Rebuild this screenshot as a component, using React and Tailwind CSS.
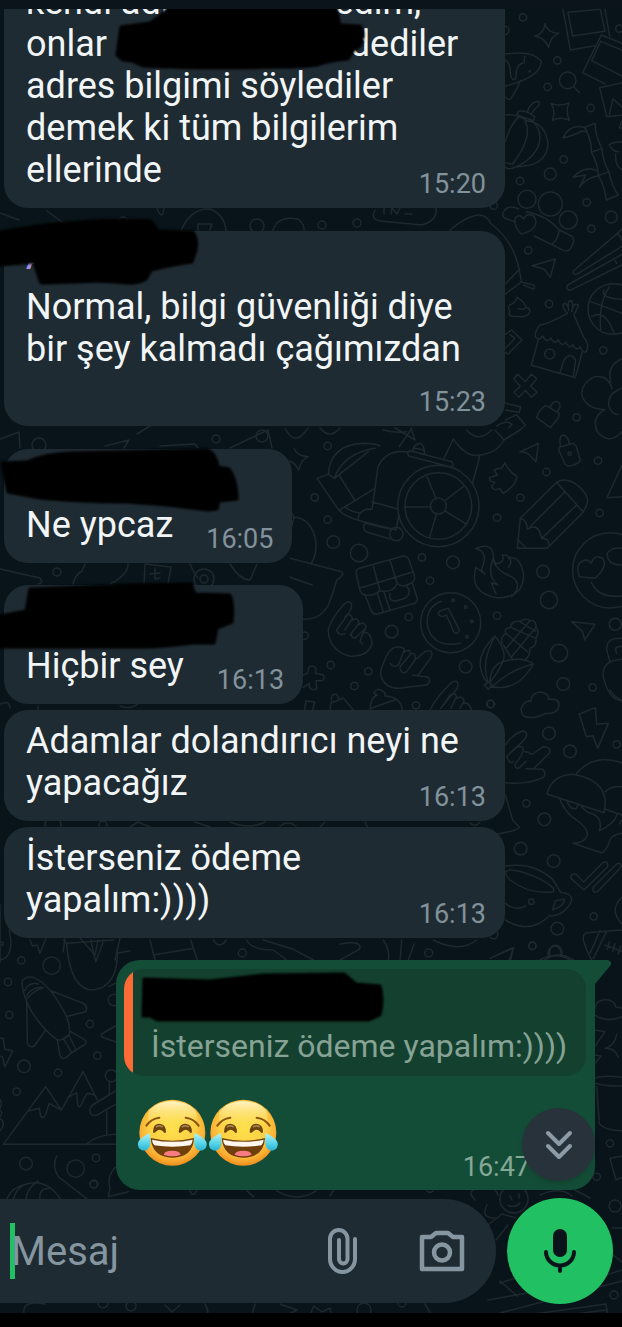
import { useState } from 'react'

// wallpaper doodles, grouped by the patch of wall they sit on
const DOODLES = [
  {
    id: 'top-right',
    transform: 'translate(490 0) scale(0.33333)',
    circles: [
      [99, 52, 11], [202, 181, 11], [233, 241, 25], [173, 261, 11], [302, 324, 11], [221, 478, 11],
      [181, 522, 18], [90, 543, 11], [111, 598, 27], [181, 612, 36], [235, 660, 27], [290, 607, 11],
      [364, 651, 18], [304, 686, 11], [115, 751, 11], [177, 912, 11], [179, 1062, 15], [340, 1051, 11],
      [260, 1252, 11], [388, 86, 11], [11, 617, 11], [119, 214, 2], [370, 927, 76], [44, 91, 13],
    ],
    paths: [
      'M165 71 Q171 99 206 100 Q180 110 176 143 Q165 112 134 109 Q163 99 165 71Z',
      'M219 28 L241 150 L314 137 M234 37 L331 28 L345 94 L248 108Z M345 28 L359 108',
      'M334 105 L278 218 L345 252 M334 105 L396 130 M332 124 L305 182 L396 228 M332 124 L396 150',
      'M396 248 L329 263 L350 350 L396 345 M358 344 L369 296 L396 322 M396 362 L388 384 L396 384',
      'M46 162 Q130 150 154 184 Q153 232 46 258 M46 180 Q62 190 61 220 Q66 248 78 235 L79 212 Q85 190 102 188 L104 169 M46 292 Q60 306 66 290 Q86 258 91 242',
      'M251 260 L269 279',
      'M184 311 Q210 320 237 309 Q225 335 239 361 Q213 348 187 361 Q198 335 184 311Z',
      'M46 345 Q80 340 110 362 M110 362 Q166 368 174 430 Q172 500 78 500 Q58 512 46 502 M46 425 Q60 375 85 352 M105 362 Q130 410 68 492 M128 364 Q172 410 128 466 Q100 494 78 500 M46 488 Q60 494 71 490 M84 334 Q110 330 134 350 L131 362 L81 345Z M111 338 Q120 306 145 304 Q154 314 136 325 L125 340',
      'M283 382 L315 370 Q316 410 336 445 Q338 485 357 515 Q365 560 385 585 L349 600 Q343 555 325 527 Q324 490 304 457 Q306 420 283 382 M219 413 Q240 370 283 382 Q300 400 276 393 Q245 410 219 413 M304 457 L336 445 M325 527 L357 515 M320 512 Q285 495 249 532 L287 525 L268 562 Q285 535 325 527 M396 425 Q370 425 358 434 Q366 455 386 455 M377 462 Q375 500 396 509',
      'M51 657 Q28 650 46 628 Q62 615 86 627 M51 657 L76 665 M108 635 Q170 645 208 690 L244 708 Q256 716 247 735 Q238 758 222 752 L133 708 M208 690 Q203 720 188 731',
      'M94 702 Q80 690 73 665 Q76 645 92 648 L101 657 Q108 640 128 646 Q142 658 136 674 Q130 694 94 702Z',
      'M126 797 L196 777 L181 832 L162 807Z',
      'M0 669 Q70 720 88 810 L94 846 L130 855 Q138 862 130 867 L100 855 M46 852 L84 812 M46 882 L94 846 M0 707 L42 753',
      'M396 688 L250 813 Q247 825 260 823 L396 739 M396 763 L233 855 Q225 868 240 871 L396 795 M384 700 L396 720 M372 775 L380 790',
      'M81 892 Q76 910 60 914 Q51 926 61 933 Q50 945 66 949 L98 950 Q120 946 120 932 Q117 922 108 922 Q104 905 81 892 M85 926 Q100 932 108 922',
      'M302 905 L396 940 M332 988 Q325 910 358 860 M342 870 Q330 895 396 898 M305 950 Q345 925 372 1000',
      'M232 940 Q210 915 225 910 Q235 915 236 932 Q230 900 243 902 Q253 910 245 935 Q250 905 265 915 Q262 925 252 945 M232 940 Q180 970 148 976 Q134 995 136 1010 Q150 1025 157 1008 Q172 1032 182 1014 Q196 1037 204 1019 Q218 1044 227 1026 Q240 1050 248 1034 Q262 1056 270 1040 Q278 1060 289 1055 Q300 1030 280 1010 L252 945',
      'M145 1018 L124 1096 L256 1133 L277 1055 M210 1118 L222 1080 Q240 1055 257 1080 L250 1128',
      'M46 1003 L65 990 L96 1020 L54 1062 L46 1058 M46 1045 L75 1015 L60 1004',
      'M83 1122 L105 1145 L125 1122 L140 1137 L122 1158 L141 1177 L124 1192 L106 1171 L87 1192 L72 1177 L91 1158 L71 1137Z',
      'M46 1210 L92 1220 L88 1237 L46 1230 M46 1260 L80 1244 L106 1275 L90 1290 M20 1278 Q50 1258 66 1273 L56 1284',
      'M167 1216 L208 1240 L205 1253 L181 1283 L140 1253 Q145 1230 167 1216Z M180 1222 Q190 1198 207 1207 Q216 1220 200 1236',
      'M366 1166 Q355 1125 315 1130 Q278 1145 275 1180 Q282 1225 345 1229 Q305 1250 320 1290 M396 1077 Q350 1095 362 1145 M396 1165 Q350 1180 357 1220 Q364 1240 384 1244',
    ],
  },
  {
    id: 'middle',
    transform: 'translate(290 430) scale(0.33333)',
    circles: [
      [113, 48, 11], [74, 202, 11], [113, 269, 11], [130, 336, 19], [207, 369, 26], [396, 382, 11],
      [489, 397, 19], [420, 452, 11], [621, 263, 11], [691, 203, 11], [769, 126, 11], [924, 92, 11],
      [929, 249, 11], [759, 425, 19], [777, 510, 26], [621, 557, 11], [356, 561, 11], [305, 605, 19],
      [527, 710, 19], [235, 724, 11], [122, 705, 11], [193, 768, 11], [378, 826, 11], [601, 822, 11],
      [807, 669, 26], [820, 762, 19], [908, 772, 11], [976, 583, 18], [445, 228, 122], [445, 228, 100],
      [445, 228, 24], [319, 312, 20], [482, 578, 90], [489, 511, 4], [527, 531, 4], [545, 574, 4],
      [531, 620, 4], [839, 71, 5], [44, 617, 11], [961, 421, 113],
    ],
    paths: [
      'M12 55 Q22 80 55 80 Q32 90 27 120 Q14 100 0 93',
      'M115 133 Q120 45 220 40 Q255 40 270 48 M133 145 Q160 70 255 55 M133 145 L235 65 M115 133 L81 145 L147 241 Q165 260 209 272 M115 133 L133 145 M147 135 L193 209 M147 241 L250 178 M165 230 Q180 245 213 250 M354 66 Q290 55 264 110 L246 238 Q205 235 204 271 L318 300 L327 255 M246 215 L323 237',
      'M225 280 L300 297 M225 280 Q215 295 228 305 L300 327 M360 62 L485 95 Q495 108 483 111 L358 79 Q348 70 360 62 M368 64 Q370 42 392 40 Q404 48 403 72 M375 55 L403 60',
      'M411 140 L438 205 M520 170 L463 213 M424 231 L345 231 M440 250 L419 320 M463 242 L531 283',
      'M462 85 L490 27 Q530 85 570 75 L547 162 M570 75 Q620 70 642 30 L690 0 M642 30 L615 0 M530 0 Q565 40 605 0 M328 50 L362 0 M280 0 Q320 10 350 5',
      'M690 66 L745 40 L738 95 L718 75 Q708 65 690 66Z',
      'M808 52 L850 40 Q860 45 862 60 L871 92 Q860 105 835 108 Q822 104 820 90 L806 60Z M811 48 Q805 16 822 15 Q836 22 838 42',
      'M645 98 Q655 125 680 138 Q680 165 640 190 L628 175 Q612 185 605 170 L615 157 Q598 155 598 143 L622 135 L612 120 Q625 112 634 116Z',
      'M682 355 L691 265 L800 157 Q830 138 870 172 Q900 200 890 225 L880 246 L778 348 L770 355Z M800 157 L880 246 M825 185 L720 290 M860 225 L755 325 M691 265 Q712 270 712 298 Q745 275 755 325 Q778 325 778 348 M682 328 L710 355',
      'M996 105 L951 203 L996 200 M918 0 Q955 50 996 5',
      'M557 355 Q610 335 610 380 Q612 405 625 400 Q645 395 637 375 Q665 375 662 400 L655 412 M557 355 Q595 365 578 410 Q570 420 585 432 L558 412 Q535 490 625 504 Q705 500 700 430 Q690 375 655 385 M608 388 Q590 440 624 465 L604 458 Q610 475 618 490 M608 388 Q620 425 665 440 Q700 465 665 500',
      'M199 432 Q195 420 208 415 L340 378 Q350 378 355 385 L373 435 Q378 455 358 462 Q335 475 322 460 Q310 490 270 482 Q250 500 225 495 Q210 490 208 475Z M208 475 L370 425 M250 408 L270 482 M300 392 L322 460 M225 495 L245 545 Q250 555 262 552 L375 520 Q386 510 380 500 L367 460 M262 490 L280 545 M282 487 L300 540 M300 490 Q295 512 315 514 L345 505 Q360 495 357 480 L350 468',
      'M455 514 Q405 530 413 590 Q430 655 511 640 M445 553 Q445 543 458 540 L475 535 L508 600 Q507 612 493 609 L469 555 Q455 565 445 553',
      'M115 600 Q120 570 160 525 Q180 505 185 525 Q185 540 165 565 L140 600 Q145 620 165 610 M115 600 Q115 660 180 679 Q235 680 247 640 Q240 605 225 608 M165 560 Q180 545 187 565 L165 600 M187 570 Q205 560 207 580 L180 615 M205 585 Q225 570 228 593 L195 625 Q180 620 185 612 M228 593 Q215 615 210 635 L218 642',
      'M278 705 Q295 655 320 650 Q350 650 340 668 L325 705 Q310 715 300 700 M340 668 Q365 650 360 675 L330 710 M360 672 Q380 665 375 690 L350 725 Q335 735 330 715 M375 690 L405 665 Q430 655 425 680 L385 735 M368 735 L415 742 Q425 755 410 765 L350 772 Q290 785 273 740 Q270 720 278 705',
      'M420 840 Q440 800 485 757 Q510 745 502 775 L452 835 M460 825 L480 795 Q495 785 500 800 L482 835 M500 805 Q520 795 522 815 L510 835 M522 820 Q535 815 545 840',
      'M615 618 Q560 670 573 720 Q580 750 595 757 Q570 700 615 618 Q650 660 640 690 Q630 720 600 757 Q600 700 650 692 Q700 680 730 702 Q680 790 600 768 M730 702 Q660 720 612 765 M595 757 L607 765 L595 778 L582 765Z M636 640 Q630 620 648 610 Q640 595 662 592 Q665 570 690 575 Q705 562 720 572 Q740 570 738 592 Q750 605 738 625 Q740 650 720 655 Q720 680 705 690 M640 645 L668 690 M648 610 L712 665 M662 592 L738 625 M690 575 L738 605 M720 572 L648 655 M738 592 L665 680',
      'M0 385 L155 425 Q165 435 140 450 Q130 490 115 525 Q90 570 40 568 M0 442 L66 465 M12 262 Q65 265 78 335 Q80 375 65 398 M0 240 L12 262 L5 290',
      'M868 440 Q855 400 880 392 Q895 385 903 400 Q915 370 938 385 Q955 410 915 445Z M996 405 Q950 405 952 370 Q965 350 996 355 M904 457 Q925 505 996 498',
      'M845 575 L915 583 L884 630 L878 605Z M996 625 Q950 620 950 660 L960 695 M996 688 Q935 690 940 740 Q955 810 996 812 M980 670 Q970 645 996 650',
      'M40 735 L52 730 L58 710 Q70 705 78 715 L76 730 L100 735 Q106 748 96 752 L78 752 L80 775 Q68 785 58 772 L58 760 L40 772',
      'M48 812 L74 816 L68 838 M48 812 L44 838 M120 838 L122 820 L160 804 L190 840 M125 815 Q120 790 140 793 L148 808 M240 838 Q242 800 262 795 Q242 790 264 778 Q290 785 285 798 Q330 800 337 838 M244 835 L320 808',
      'M700 858 Q685 835 705 818 Q720 810 722 815 Q725 785 755 786 Q780 795 775 808 Q810 805 807 828 Q800 855 765 850 Q735 870 700 858Z',
    ],
  },
  {
    id: 'right-lower',
    transform: 'translate(490 690) scale(0.33333)',
    circles: [
      [177, 130, 19], [240, 184, 19], [380, 163, 11], [109, 340, 11], [163, 388, 19], [92, 476, 19],
      [191, 513, 19], [202, 716, 19], [311, 679, 11], [127, 768, 11], [124, 635, 8], [3, 42, 11],
    ],
    paths: [
      'M268 72 L316 53 L320 103 L355 100 L323 175 L309 137 L289 140Z',
      'M46 165 Q70 130 100 123 Q120 130 100 152 L50 200 Q60 225 70 215 M60 190 Q80 165 95 170 Q110 180 75 222 Q75 240 90 232 L108 214 M105 185 L115 187 Q125 195 128 192 L160 170 Q185 170 178 190 L132 235 M108 236 L158 238 Q170 250 160 262 Q110 285 46 278',
      'M46 315 L68 390 L88 412 Q85 422 20 432',
      'M171 312 Q185 255 250 253 Q345 270 346 340 L342 368Z M260 250 Q310 190 396 218 M345 305 Q365 288 396 290 M346 358 L396 375 M210 328 Q225 370 260 390 Q300 420 290 440 Q280 460 248 460 L335 488 Q348 485 360 450 Q370 432 396 430 M232 335 Q240 360 260 355 L264 345 M275 350 Q290 370 310 372 Q335 385 330 415 L328 422 Q370 405 382 372 M396 390 L388 402',
      'M243 565 Q240 548 258 553 L281 576 L338 518 Q355 510 353 530 L282 600 L243 565 M310 592 L380 522 Q392 515 394 530 L322 605 Q305 610 310 592',
      'M46 528 Q130 515 188 568 L212 607 M46 545 Q60 530 140 562 Q200 592 190 605 Q120 615 60 570 Q46 555 46 545 M46 690 Q120 735 178 677 Q200 680 220 665 Q260 630 235 612 L212 607 M196 632 L223 628 Q225 645 188 660Z M46 640 Q75 665 108 648',
      'M396 720 L290 728 Q278 732 280 750 Q290 785 305 810 M330 722 L300 790 M350 724 L310 805 M345 765 L396 785 M358 755 L352 778 M375 760 L368 785 M392 768 L385 792',
      'M396 622 Q355 660 396 702 M360 0 Q375 25 396 30 M0 805 L70 772 L62 810 M175 800 Q170 770 198 768 Q215 775 213 795 M165 810 Q205 780 250 810',
      'M0 742 Q22 755 24 728',
    ],
  },
  {
    id: 'left-lower',
    transform: 'translate(0 930) scale(0.33333)',
    circles: [
      [64, 91, 11], [155, 107, 26], [24, 156, 11], [28, 255, 11], [270, 282, 11], [292, 377, 11],
      [72, 409, 19], [174, 428, 11], [50, 485, 11], [78, 701, 19], [227, 716, 26], [288, 684, 11],
      [281, 763, 11], [342, 210, 17], [334, 437, 18], [5, 41, 5],
    ],
    paths: [
      'M66 155 Q75 138 100 142 Q150 160 200 260 Q212 290 208 315 Q185 335 170 328 Q130 300 95 245 Q65 190 66 155 M74 182 Q85 155 115 162 M80 198 Q95 168 130 173 Q110 175 82 205 M155 183 L250 220 Q265 230 257 245 L202 259 M80 215 L82 340 Q90 355 103 348 L135 303 M172 332 L180 375 Q185 390 198 383 L215 368 L190 325 L207 315 L228 360 L252 345 Q265 335 252 328 L212 305 M215 368 L228 360',
      'M0 325 L10 325 L14 358 L38 362 L15 411 L8 382 L0 378',
      'M10 643 L137 470 L184 540 L249 425 L292 510 M85 543 L118 535 L122 558 Q130 570 138 550 L148 520 L184 540 M205 502 L230 488 L233 525 Q240 540 250 510 L262 490 L284 495 M10 643 L346 643 M258 643 Q290 615 346 613 M346 483 L278 525 Q262 540 275 555 L290 556 L346 523 M328 455 L328 495 M320 545 L320 612',
      'M170 677 Q155 710 175 740 L265 810 M20 808 Q35 770 80 762 Q140 745 182 808 M40 808 Q50 770 80 762 M78 808 Q80 775 115 753 M120 808 Q115 775 150 775',
      'M190 30 L200 40 L340 30 M200 40 Q210 180 280 180 Q355 170 352 60 M272 30 L287 95 L312 30 M352 70 L390 62 M325 170 L346 160 M90 30 L98 48 L112 45 L120 70 L138 25',
      'M0 90 Q35 85 32 30 L28 0 M346 288 L305 312 Q300 322 315 325 L346 335 M346 712 Q320 740 330 775 L325 800 L385 785',
      'M0 508 Q8 520 0 535 M0 540 Q10 548 0 560 M0 565 Q20 580 0 602',
    ],
  },
  {
    id: 'edge-bottom',
    transform: 'translate(100 940) scale(0.33333)',
    circles: [[427, 39, 12], [986, 39, 12], [1297, 17, 11], [1530, 610, 11], [1490, 710, 11]],
    paths: [
      'M150 0 L165 60 M160 45 L280 25 M272 0 L292 60 M340 0 Q360 30 378 0 M440 0 Q455 30 520 30 L560 60 M490 0 L580 28 L640 60 M720 12 Q790 0 778 28 L720 60 M850 0 Q870 30 865 60 M900 60 L905 0 M925 60 L942 12 M1000 0 Q1080 40 1130 0 M1175 52 L1240 25 L1228 60 M1350 50 Q1345 15 1368 16 Q1388 20 1385 45 M1320 60 Q1370 35 1410 60',
      'M1485 205 Q1490 175 1525 180 Q1545 185 1547 200 L1566 205 M1485 225 Q1520 250 1566 230',
      'M1485 270 L1515 275 L1485 320 M1485 345 L1503 348 L1485 370 M1550 283 Q1545 315 1516 325 Q1545 325 1555 352',
      'M1485 415 Q1510 405 1566 412 M1485 430 Q1520 440 1566 438 M1490 440 L1498 550 Q1510 570 1566 572 M1530 655 L1566 648 M1530 655 L1548 720 L1566 712',
      'M270 752 L275 762 Q285 765 290 752 M440 752 L460 770 M530 752 Q590 790 650 752 M690 768 L700 752 M980 752 Q990 762 1000 752',
    ],
  },
  {
    id: 'bubble-gaps',
    transform: 'translate(0 0)',
    circles: [
      [257, 226, 7], [322, 225, 4], [357, 223, 4], [123, 221, 4], [39, 445, 7], [216, 439, 4],
      [57, 572, 4], [204, 579, 10], [204, 579, 4], [53, 825, 8], [103, 825, 4], [262, 436, 6],
      [94, 1184, 4], [131, 1306, 5], [402, 1303, 4], [614, 1295, 4], [615, 1206, 6], [514, 1199, 14],
      [364, 1310, 7], [103, 1303, 5],
    ],
    paths: [
      'M0 213 L19 220 M47 211 L73 230 M157 208 Q162 222 164 208 M181 231 Q190 208 210 209 Q225 215 226 231 M198 230 L198 224 L212 224 L210 230 M273 230 Q278 215 298 219 Q305 225 304 230 M375 210 Q370 219 380 221 L422 225 Q438 220 436 208 M384 214 L384 208 M391 214 L392 208 L397 214 L400 208 M405 214 L412 214 M450 230 Q480 205 490 222',
      'M0 439 L19 432 L20 448 M105 446 L129 440 L124 448 M160 446 L195 444 L198 448 M137 434 L150 426 M230 448 L268 430 L272 448 M285 428 Q295 448 308 428 M320 428 Q330 440 340 428 M395 428 L415 440 L411 428',
      'M0 569 L40 578 Q44 583 38 584 M73 584 Q75 575 82 571 L85 564 M128 564 Q128 575 110 584 M144 584 L145 564 L171 567 L168 584 M155 568 L155 579 L160 578 M150 574 L160 573 M190 564 Q195 575 198 578 M230 564 Q240 580 250 580 L257 564',
      'M0 704 Q10 700 10 708 M38 706 L38 710 M120 706 Q130 710 138 704 M195 822 L210 827 M130 827 L138 822 L150 827 M230 822 Q250 830 265 822 M280 826 Q288 820 296 826 M320 827 L325 822 M365 822 L368 828 M470 823 Q475 828 480 822',
      'M0 963 L0 905 M65 938 L63 952 M80 938 L95 955 L98 940 M115 960 L120 938',
      'M24 1313 Q22 1300 45 1304 M165 1305 L172 1312 L180 1305 M205 1304 Q210 1312 206 1316 M255 1304 L252 1315 M280 1304 L297 1310 L285 1316 M310 1314 L314 1306 L322 1312 L330 1308 L332 1316 M425 1304 L432 1316',
      'M488 1225 L502 1214 L516 1218 M496 1240 L508 1225 M488 1300 L560 1287 M500 1281 L517 1296 M500 1313 L622 1281 M500 1283 L525 1275 M520 1316 L606 1304 L608 1316 M530 1320 L606 1310 M540 1195 Q560 1186 572 1196 M575 1190 L590 1198 M612 1228 L622 1228 M613 1255 L622 1262 M590 1280 L622 1270',
      'M475 1200 Q465 1190 480 1188 Q495 1184 498 1195 M487 1205 Q480 1218 495 1218 M510 1196 L512 1200 M519 1194 L519 1198 M508 1205 Q514 1209 520 1203',
    ],
  },
]

function Wallpaper() {
  return (
    <svg
      aria-hidden="true"
      viewBox="0 9 622 1304"
      preserveAspectRatio="xMidYMax slice"
      className="absolute inset-0 h-full w-full"
      fill="none"
      stroke="#1e282f"
      strokeWidth="1.5"
      strokeLinecap="round"
      strokeLinejoin="round"
    >
      {DOODLES.map((group) => (
        <g key={group.id} transform={group.transform}>
          {group.circles.map(([cx, cy, r]) => (
            <circle key={`${cx}-${cy}-${r}`} cx={cx} cy={cy} r={r} vectorEffect="non-scaling-stroke" />
          ))}
          {group.paths.map((d) => (
            <path key={d} d={d} vectorEffect="non-scaling-stroke" />
          ))}
        </g>
      ))}
    </svg>
  )
}

// black marker stroke drawn over a name
function Marker({ className, viewBox, d }) {
  return (
    <svg aria-hidden="true" viewBox={viewBox} className={`absolute overflow-visible blur-[1px] ${className}`}>
      <path d={d} fill="#000" stroke="#000" strokeWidth="3" strokeLinejoin="round" />
    </svg>
  )
}

function Time({ children, className = '' }) {
  return <time className={`block shrink-0 text-right text-[27px] leading-8 text-[#82929b] ${className}`}>{children}</time>
}

function Bubble({ children, className = '' }) {
  return (
    <article className={`relative shrink-0 self-start rounded-3xl bg-[#1f2b33] pr-[19px] pb-2 pl-[22px] ${className}`}>
      {children}
    </article>
  )
}

function JoyEmoji() {
  return (
    <svg viewBox="22 24 213 207" className="h-[69px] w-[71px]" role="img" aria-label="😂">
      <defs>
        <radialGradient id="face" cx="50%" cy="42%" r="58%">
          <stop offset="0" stopColor="#fde04b" />
          <stop offset="0.6" stopColor="#fcd045" />
          <stop offset="0.85" stopColor="#f9ae33" />
          <stop offset="1" stopColor="#ef8e1d" />
        </radialGradient>
        <linearGradient id="shine" x1="0" y1="0" x2="0" y2="1">
          <stop offset="0" stopColor="#fff3c4" />
          <stop offset="1" stopColor="#fde04b" stopOpacity="0" />
        </linearGradient>
        <linearGradient id="tear" x1="0" y1="0" x2="0" y2="1">
          <stop offset="0" stopColor="#b8f3f6" />
          <stop offset="0.6" stopColor="#55d3e8" />
          <stop offset="1" stopColor="#2bb4d4" />
        </linearGradient>
      </defs>
      <circle cx="128" cy="128" r="99" fill="url(#face)" />
      <ellipse cx="128" cy="78" rx="74" ry="44" fill="url(#shine)" />
      <path d="M50 107 Q64 86 89 83 M207 107 Q193 86 168 83" fill="none" stroke="#8a5410" strokeWidth="6" strokeLinecap="round" />
      <path
        d="M70 126 Q70 101 89 101 Q109 102 109 127 Q104 132 100 124 Q90 114 80 124 Q74 132 70 126Z M147 126 Q148 101 167 101 Q187 102 187 127 Q182 132 178 124 Q168 114 158 124 Q151 132 147 126Z"
        fill="#6b430f"
      />
      <path d="M79 111 Q89 104 99 111 M157 111 Q167 104 177 111" fill="none" stroke="#a5834e" strokeWidth="5" />
      <path d="M63 144 Q128 160 193 144 Q190 202 128 203 Q68 202 63 144Z" fill="#70400c" />
      <path d="M67 149 Q128 162 189 149 Q188 160 182 166 Q128 174 74 166 Q68 160 67 149Z" fill="#fff7ee" />
      <path d="M102 194 Q104 182 128 182 Q150 182 153 194 Q128 203 102 194Z" fill="#f77c82" />
      <path d="M60 129 Q66 160 58 174 Q48 186 34 179 Q20 170 27 154 Q34 142 60 129Z M195 129 Q190 160 198 174 Q208 186 222 179 Q236 170 229 154 Q222 142 195 129Z" fill="url(#tear)" />
    </svg>
  )
}

function Messages() {
  return (
    <section className="relative flex min-h-0 flex-1 flex-col justify-end overflow-hidden pl-1 text-4xl leading-[42px] text-[#f1f5f6]">
      <Bubble className="w-full max-w-[501px]">
        <p className="flow-root">
          kendi adımı söylemedim,
          <br />
          onlar <span className="inline-block w-[225px]" /> dediler
          <br />
          adres bilgimi söylediler demek ki tüm bilgilerim ellerinde
          <Time className="float-right mt-[19px]">15:20</Time>
        </p>
        <Marker
          className="bottom-[138px] left-[111px] h-[62px] w-[251px]"
          viewBox="115 8 251 62"
          d="M169 8 L336 8 L340 25 L360 26 Q366 34 360 46 L354 50 L348 59 Q330 60 317 65 Q300 67 278 67 Q200 69 143 66 L132 61 L123 60 L117 55 L121 27 L150 23 L160 16Z"
        />
      </Bubble>

      <Bubble className="mt-[23px] w-full max-w-[501px]">
        <h2 className="h-[55px] pt-[10px] text-3xl leading-9 font-medium text-[#a58fe0]">A</h2>
        <p>Normal, bilgi güvenliği diye bir şey kalmadı çağımızdan</p>
        <Time className="mt-4">15:23</Time>
        <Marker
          className="-top-3 -left-1 h-[66px] w-[198px]"
          viewBox="0 219 198 66"
          d="M0 232 L38 226 Q100 218 151 221 L158 231 L193 232 Q198 240 196 250 L192 262 Q170 265 151 270 L146 279 Q138 284 128 283 Q100 280 75 282 L41 283 L37 272 L34 262 L0 265Z"
        />
      </Bubble>

      <Bubble className="mt-[23px]">
        <h2 className="h-[55px]" />
        <div className="flex items-end gap-[33px]">
          <p className="pb-[9px]">Ne ypcaz</p>
          <Time>16:05</Time>
        </div>
        <Marker
          className="top-0 -left-1 h-[63px] w-[240px]"
          viewBox="0 449 240 63"
          d="M2 463 L27 462 Q45 454 70 453 L208 450 Q216 454 218 467 L229 469 Q237 480 237 499 L219 501 L217 509 L208 510 L167 505 L127 502 Q80 502 40 498 L8 492Z"
        />
      </Bubble>

      <Bubble className="mt-[22px]">
        <h2 className="h-[60px]" />
        <div className="flex items-end gap-[33px]">
          <p className="pb-[9px]">Hiçbir sey</p>
          <Time>16:13</Time>
        </div>
        <Marker
          className="-top-[3px] -left-1 h-[67px] w-[235px]"
          viewBox="0 582 235 67"
          d="M30 589 L133 585 L191 584 L195 594 L230 595 Q234 604 232 622 L217 628 L214 643 L193 643 Q160 647 143 647 L0 647 L0 616 L26 611Z"
        />
      </Bubble>

      <Bubble className="mt-[6px] w-full max-w-[501px] pt-[10px]">
        <p className="flow-root">
          Adamlar dolandırıcı neyi ne yapacağız
          <Time className="float-right mt-[19px]">16:13</Time>
        </p>
      </Bubble>

      <Bubble className="mt-[6px] w-full max-w-[501px] pt-[10px]">
        <p className="flow-root">
          İsterseniz ödeme
          <br />
          yapalım:))))
          <Time className="float-right mt-[19px]">16:13</Time>
        </p>
      </Bubble>

      <article className="relative mt-[22px] mr-[27px] w-[479px] max-w-full shrink-0 self-end rounded-3xl rounded-tr-none bg-[#144d37] px-2 pt-[9px]">
        <svg aria-hidden="true" viewBox="0 0 30 26" className="absolute top-0 -right-4 h-[26px] w-[30px]" fill="#144d37">
          <path d="M0 0 H27 Q32 2 29 6 L14 24 H0Z" />
        </svg>
        <blockquote className="relative mr-px overflow-hidden rounded-[20px] bg-[#14412f] pt-14 pb-[9px] pl-[27px] text-[32px] leading-[42px] whitespace-nowrap text-[#86a395]">
          <span className="absolute inset-y-0 left-0 w-[9px] bg-[#fc6a35]" />
          İsterseniz ödeme yapalım:))))
          <Marker
            className="top-[3px] left-[18px] h-[50px] w-[242px]"
            viewBox="142 972 242 50"
            d="M144 979 Q180 980 210 981 L263 975 L344 974 L356 984 L380 986 Q384 1000 380 1015 L369 1020 L157 1020 L150 1016 L143 1016Z"
          />
        </blockquote>
        <div className="flex h-[114px] justify-between pr-[57px] pl-[13px]">
          <p className="flex pt-[22px]">
            <JoyEmoji />
            <JoyEmoji />
          </p>
          <Time className="self-end pb-[7px] text-[#85a796]!">16:47</Time>
        </div>
      </article>

      <button
        type="button"
        aria-label="En alta in"
        className="absolute right-[27px] bottom-[9px] flex h-[73px] w-[73px] items-center justify-center rounded-full bg-[#28323a] shadow-md"
      >
        <svg viewBox="0 0 28 30" className="h-[30px] w-[28px]" fill="none" stroke="#8d9ba7" strokeWidth="4" strokeLinecap="round" strokeLinejoin="round">
          <path d="M3 3 L14 14 L25 3 M3 16 L14 27 L25 16" />
        </svg>
      </button>
    </section>
  )
}

function Composer() {
  const [message, setMessage] = useState('')

  return (
    <form className="relative flex shrink-0 items-center pt-2 pr-[9px] pb-[9px]" onSubmit={(e) => e.preventDefault()}>
      <div className="mr-[11px] flex h-[104px] min-w-0 flex-1 items-center rounded-r-full bg-[#1f2b33] pr-[31px] pl-[10px]">
        <span className="h-14 w-[5px] shrink-0 bg-[#21c063]" />
        <input
          type="text"
          aria-label="Mesaj"
          placeholder="Mesaj"
          value={message}
          onChange={(e) => setMessage(e.target.value)}
          className="-ml-1 h-14 min-w-0 flex-1 bg-transparent pt-[2px] text-[40px] text-[#f1f5f6] caret-transparent outline-none placeholder:text-[#8696a0]"
        />
        <button type="button" aria-label="Ekle" className="mr-[61px] shrink-0">
          <svg viewBox="0 0 30 46" className="h-[46px] w-[30px]" fill="none" stroke="#8696a0" strokeWidth="4" strokeLinecap="round">
            <path d="M27 11 V31 A12.500 13 0 0 1 2 31 V11 A8.750 9 0 0 1 19.500 11 V31 A4.250 4.500 0 0 1 11 31 V12" />
          </svg>
        </button>
        <button type="button" aria-label="Kamera" className="shrink-0">
          <svg viewBox="0 0 46 42" className="h-[42px] w-[46px]" fill="none" stroke="#8696a0" strokeWidth="4.5" strokeLinejoin="round">
            <path d="M3 7 H12 L17 3 H29 L34 7 H43 V39 H3Z" />
            <circle cx="23" cy="22.5" r="8" />
          </svg>
        </button>
      </div>
      <button
        type="button"
        aria-label="Sesli mesaj"
        className="flex h-[106px] w-[106px] shrink-0 items-center justify-center rounded-full bg-[#21c063]"
      >
        <svg viewBox="0 0 34 44" className="h-11 w-[34px]" fill="none" stroke="#0b141a" strokeWidth="4" strokeLinecap="round">
          <rect x="10" y="0" width="14" height="28" rx="7" fill="#0b141a" stroke="none" />
          <path d="M3 23 A14 13.500 0 0 0 31 23 M17 37 V42" />
        </svg>
      </button>
    </form>
  )
}

export default function App() {
  return (
    <div className="flex h-screen flex-col overflow-hidden bg-black font-[Roboto,sans-serif]">
      <header className="relative z-10 h-[9px] shrink-0 bg-[#0b141b]" />
      <main className="relative flex min-h-0 flex-1 flex-col bg-[#081419]">
        <Wallpaper />
        <Messages />
        <Composer />
      </main>
      <footer className="relative h-[14px] shrink-0 bg-black" />
    </div>
  )
}
